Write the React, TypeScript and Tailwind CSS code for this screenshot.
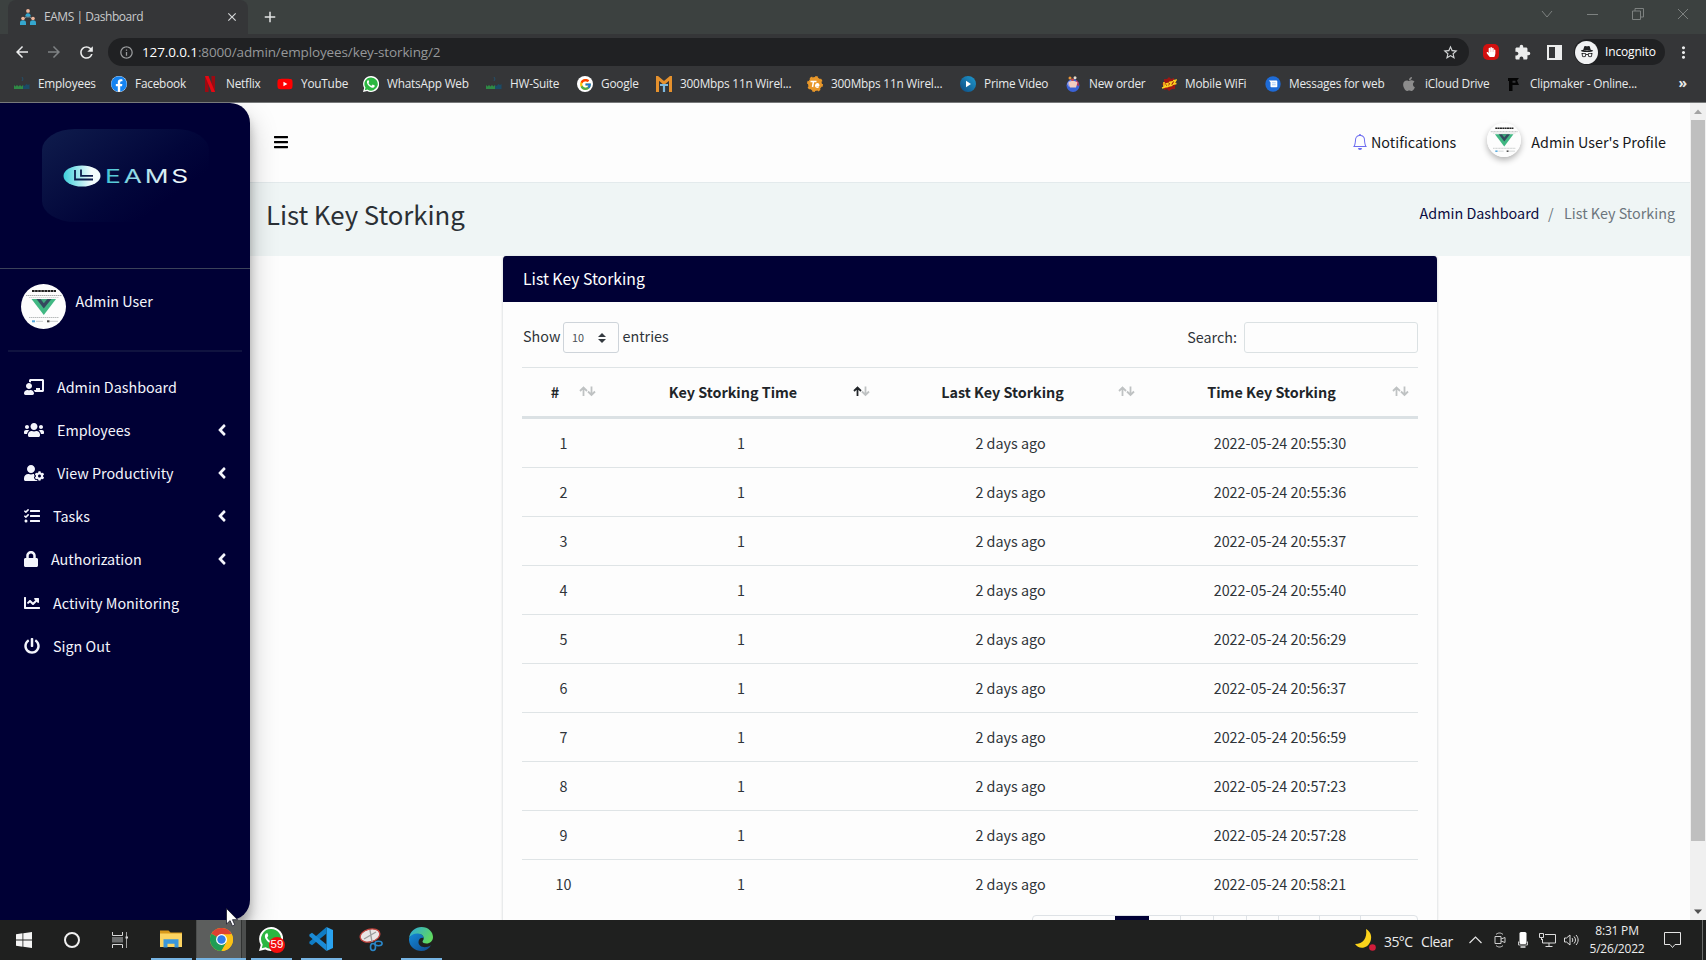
import React from "react";
import {
  FaAngleLeft,
  FaApple,
  FaBars,
  FaChalkboardTeacher,
  FaChartLine,
  FaFacebook,
  FaHandPaper,
  FaLock,
  FaPowerOff,
  FaTasks,
  FaUserCog,
  FaUsers,
  FaYoutube,
} from "react-icons/fa";
import { FcGoogle } from "react-icons/fc";
import { BsBell, BsIncognito } from "react-icons/bs";
import {
  MdArrowBack,
  MdArrowForward,
  MdClose,
  MdExtension,
  MdInfoOutline,
  MdMoreVert,
  MdRefresh,
  MdStarBorder,
  MdAdd,
} from "react-icons/md";

/* ---------- Small drawings ---------- */

function SuiteIcon() {
  return (
    <svg width="16" height="16" viewBox="0 0 16 16">
      <path d="M0 13V9l1.500 1.500L3 9l1.500 1.500L6 9l1.500 1.500L9 9v4z" fill="#2f8a45" />
      <path d="M9 13V9l1.500 1 2-2 1.500 1 1.500-1v5z" fill="#1b4b66" />
      <path d="M8 1l1 2-1 2" stroke="#24506b" fill="none" />
    </svg>
  );
}

function NetflixIcon() {
  return (
    <svg width="16" height="16" viewBox="0 0 16 16">
      <path d="M3 0h3.500v16H3zM9.500 0H13v16H9.500z" fill="#9d0a12" />
      <path d="M3 0h3.500L13 16H9.500z" fill="#e50914" />
    </svg>
  );
}

function WhatsAppIcon({ size }: { size: number }) {
  return (
    <svg width={size} height={size} viewBox="0 0 24 24">
      <path d="M12 0a12 12 0 0 0-10.300 18L0 24l6.200-1.600A12 12 0 1 0 12 0z" fill="#fff" />
      <path d="M12 2.100a9.900 9.900 0 0 0-8.300 15.300L2.800 21.200l3.900-1A9.900 9.900 0 1 0 12 2.100z" fill="#2bb741" />
      <path
        d="M8.600 6.600c-.3-.6-1.300-.5-1.800.1-2.400 2.800.4 6.700 3.200 8.900 2.600 2 5.900 2.700 7.300.4.500-1 .3-1.700-.2-2l-2-1c-.5-.2-.8-.1-1.100.4l-.8 1c-.3.300-.6.300-1 .1-1.800-.8-3-2-3.900-3.600-.2-.4-.1-.6.200-.9.700-.8.900-1.100.6-1.700z"
        fill="#fff"
      />
    </svg>
  );
}

function MtIcon() {
  return (
    <svg width="16" height="16" viewBox="0 0 16 16" fill="none">
      <path d="M1.500 16V1.500L8 7l6.500-5.500V16" stroke="#e5912d" strokeWidth="3" />
      <path d="M4 9h8M8 9v7" stroke="#7db9df" strokeWidth="2.200" />
    </svg>
  );
}

function GearTeIcon() {
  return (
    <svg width="16" height="16" viewBox="0 0 16 16" fill="none">
      <circle cx="8" cy="8" r="7" fill="#e8972a" />
      <circle cx="8" cy="8" r="7" stroke="#e8972a" strokeWidth="2" strokeDasharray="2.700 2.800" />
      <path d="M3.500 5.500h6M6.500 5.500l-1 5.500M8.500 9.200h3.200c0-2.200-2.800-2-3 .4-.1 1.800 1.800 2 3 .9" stroke="#fff" strokeWidth="1.500" />
    </svg>
  );
}

function PrimeIcon() {
  return (
    <svg width="16" height="16" viewBox="0 0 16 16">
      <defs>
        <linearGradient id="prime" x1="0" y1="1" x2="1" y2="0">
          <stop offset="0" stopColor="#0c4a80" />
          <stop offset="1" stopColor="#1f9bd0" />
        </linearGradient>
      </defs>
      <circle cx="8" cy="8" r="8" fill="url(#prime)" />
      <path d="M6 4.800v6.400L11 8z" fill="#fff" />
    </svg>
  );
}

function OrderIcon() {
  return (
    <svg width="16" height="16" viewBox="0 0 16 16">
      <circle cx="8" cy="9.500" r="6.500" fill="#3b62d6" />
      <path d="M2 8a6 6 0 0 1 4-4l3 3-5 4z" fill="#8f9be8" />
      <path d="M11 4a6 6 0 0 1 3 6l-3-1z" fill="#b3324f" />
      <path d="M3.500 6.500c2-2 7-2 9 0L11 11.500H5z" fill="#f3cdc0" />
      <circle cx="5" cy="2" r="1.500" fill="#e9963a" />
      <circle cx="10" cy="1.700" r="1.500" fill="#e6dccd" />
      <circle cx="7.500" cy="3.800" r="1.300" fill="#d8453a" />
    </svg>
  );
}

function JazzIcon() {
  return (
    <svg width="16" height="16" viewBox="0 0 16 16" fill="none">
      <path d="M8 1l2 2 3-1v3l2.500 2L14 10l0 3-3 0-3 2-2-2-3 1 0-3-2-3 2-2 0-3 3 0z" fill="#9d1713" />
      <path d="M3 6v5.500L1 12M4.500 8l2.500-.5-.3 3-2.200.3.200-2M8 6.500l3-.6-2.500 4 3-.6M12 4.800l3-.6-2.500 4 3-.6" stroke="#ffd21f" strokeWidth="1.500" />
    </svg>
  );
}

function MessagesIcon() {
  return (
    <svg width="16" height="16" viewBox="0 0 16 16">
      <circle cx="8" cy="8" r="7.700" fill="#1e6bd6" />
      <path d="M3.800 4.500h7.700c.5 0 .8.300.8.800v5.200c0 .5-.3.800-.8.800H6.300c-.5 0-.8-.3-.8-.8V6.300z" fill="#fff" />
      <path d="M7 6.800h3.800M7 8.800h3.800" stroke="#a9c9f5" />
    </svg>
  );
}

function ClipIcon() {
  return (
    <svg width="16" height="16" viewBox="0 0 16 16">
      <path d="M2 2h11l-2 2.500 2 4.500H6.500v6H3V5H2zM6.500 4.800v2h3v-2z" fill="#050505" fillRule="evenodd" />
    </svg>
  );
}

function TabIcon() {
  return (
    <svg width="16" height="16" viewBox="0 0 16 16">
      <path d="M8 6v3M4 9.500L8 7l4 2.500" stroke="#7a8a92" fill="none" />
      <circle cx="8" cy="1.900" r="1.900" fill="#efb69a" />
      <path d="M5.200 7.600c0-4.600 5.600-4.600 5.600 0z" fill="#35a7cf" />
      <circle cx="3" cy="9.500" r="1.800" fill="#efb69a" />
      <path d="M0 16v-2.500c0-3 6-3 6 0V16z" fill="#35a7cf" />
      <circle cx="13" cy="9.500" r="1.800" fill="#efb69a" />
      <path d="M10 16v-2.500c0-3 6-3 6 0V16z" fill="#35a7cf" />
    </svg>
  );
}

function VueAvatar({ size }: { size: number }) {
  return (
    <svg width={size} height={size} viewBox="0 0 45 45">
      <circle cx="22.500" cy="22.500" r="22.500" fill="#fdfdfd" />
      <path d="M11 7h24" stroke="#222" strokeWidth="2.200" strokeDasharray="2.600 .5" />
      <path d="M5 11.500h36" stroke="#a9adad" strokeWidth="1" strokeDasharray="1.500 .5" />
      <path d="M8 13.500h30" stroke="#c9cccc" strokeWidth=".8" strokeDasharray="1.500 .5" />
      <path d="M10.500 15h24.500L22.800 31z" fill="#41b883" />
      <path d="M15.500 15h15L22.800 24.500z" fill="#35495e" />
      <path d="M19.600 15h6.800l-3.600 4.200z" fill="#41b883" opacity=".85" />
      <path d="M8 33.500h30" stroke="#b9bcbc" strokeWidth="1" strokeDasharray="1.500 .5" />
      <path d="M11 37.300h3" stroke="#55a9dd" strokeWidth="2" />
      <path d="M15 37.300h7M29 37.300h8" stroke="#c9cccc" strokeWidth="1" />
      <path d="M26 37.300h2.500" stroke="#444" strokeWidth="2" />
    </svg>
  );
}

function EamsLogo() {
  return (
    <svg width="167" height="94" viewBox="0 0 167 94">
      <defs>
        <linearGradient id="panel" x1="0" y1="0" x2="1" y2=".75">
          <stop offset="0" stopColor="#0f1c4c" />
          <stop offset=".62" stopColor="#02063a" />
          <stop offset=".85" stopColor="#000035" />
        </linearGradient>
        <linearGradient id="oval" x1="0" y1="0" x2="1" y2="0">
          <stop offset="0" stopColor="#3ccfdb" />
          <stop offset=".75" stopColor="#f3fcfd" />
        </linearGradient>
        <linearGradient id="word" x1="0" y1="0" x2="1" y2="0">
          <stop offset="0" stopColor="#3fc4d4" />
          <stop offset=".6" stopColor="#cfeaf2" />
          <stop offset="1" stopColor="#ffffff" />
        </linearGradient>
      </defs>
      <rect width="167" height="93" rx="33" ry="21" fill="url(#panel)" />
      <ellipse cx="40" cy="47" rx="18.500" ry="10.500" fill="url(#oval)" />
      <path d="M33 41v9.500h18M39 40.500v6.300h12" stroke="#0b1c4c" strokeWidth="1.800" fill="none" />
      <text
        x="63"
        y="53.500"
        fontFamily="Inter, sans-serif"
        fontSize="18.500"
        textLength="86"
        lengthAdjust="spacingAndGlyphs"
        letterSpacing="2"
        fill="url(#word)"
      >
        EAMS
      </text>
    </svg>
  );
}

/* ---------- Browser chrome ---------- */

const bookmarks: { label: string; icon: React.ReactNode; width: string }[] = [
  { label: "Employees", icon: <SuiteIcon />, width: "w-[97px]" },
  { label: "Facebook", icon: <span className="rounded-full bg-white"><FaFacebook size={16} color="#1583f0" /></span>, width: "w-[91px]" },
  { label: "Netflix", icon: <NetflixIcon />, width: "w-[75px]" },
  { label: "YouTube", icon: <span className="relative flex"><span className="absolute inset-1 bg-white" /><FaYoutube size={16} color="#f00" className="relative" /></span>, width: "w-[86px]" },
  { label: "WhatsApp Web", icon: <WhatsAppIcon size={16} />, width: "w-[123px]" },
  { label: "HW-Suite", icon: <SuiteIcon />, width: "w-[91px]" },
  { label: "Google", icon: <span className="flex size-4 items-center justify-center rounded-full bg-white"><FcGoogle size={13} /></span>, width: "w-[79px]" },
  { label: "300Mbps 11n Wirel...", icon: <MtIcon />, width: "w-[151px]" },
  { label: "300Mbps 11n Wirel...", icon: <GearTeIcon />, width: "w-[153px]" },
  { label: "Prime Video", icon: <PrimeIcon />, width: "w-[105px]" },
  { label: "New order", icon: <OrderIcon />, width: "w-[96px]" },
  { label: "Mobile WiFi", icon: <JazzIcon />, width: "w-[104px]" },
  { label: "Messages for web", icon: <MessagesIcon />, width: "w-[136px]" },
  { label: "iCloud Drive", icon: <FaApple size={16} color="#8c8c8c" />, width: "w-[105px]" },
  { label: "Clipmaker - Online...", icon: <ClipIcon />, width: "w-[140px]" },
];

function BrowserChrome() {
  return (
    <header className="flex h-[103px] shrink-0 flex-col border-b border-[#77797a] bg-[#353638] font-['Open_Sans',sans-serif] text-white">
      <div className="flex h-[34px] bg-[#3c4140]">
        <div className="ml-2 flex h-[34px] w-[240px] items-center rounded-t-lg bg-[#353638] pl-3 pr-[9px]">
          <TabIcon />
          <span className="ml-2 flex-1 text-[12px] tracking-[-0.45px] text-[#c9cbcc]">EAMS | Dashboard</span>
          <MdClose size={14} color="#d5d7d8" />
        </div>
        <MdAdd size={18} color="#e2e4e4" className="ml-[13px] mt-2" />
        <div className="ml-auto flex h-7 items-center gap-[33px] pr-[17px] text-[#7d8180]">
          <svg width="12" height="12" viewBox="0 0 12 12" fill="none" stroke="currentColor"><path d="M1 3l5 6 5-6" /></svg>
          <svg width="13" height="12" viewBox="0 0 13 12" fill="none" stroke="currentColor"><path d="M1 6.500h11" /></svg>
          <svg width="12" height="12" viewBox="0 0 12 12" fill="none" stroke="currentColor"><path d="M.5 3h8v8.500h-8zM3 3V.5h8.500V9H8.500" /></svg>
          <svg width="12" height="12" viewBox="0 0 12 12" fill="none" stroke="currentColor"><path d="M1 1l10 10M11 1L1 11" /></svg>
        </div>
      </div>

      <div className="flex h-9 items-center pl-[13px]">
        <MdArrowBack size={18} color="#eceded" />
        <MdArrowForward size={18} color="#7f8284" className="ml-[14px]" />
        <MdRefresh size={19} color="#eceded" className="ml-[14px]" />
        <div className="ml-3 flex h-7 w-[1361px] items-center rounded-full bg-[#202123] pl-[11px] pr-2.5">
          <MdInfoOutline size={15} color="#9a9c9e" />
          <span className="ml-2 text-[13.5px] tracking-[-0.12px] text-[#96989a]">
            <span className="text-white">127.0.0.1</span>:8000/admin/employees/key-storking/2
          </span>
          <MdStarBorder size={17} color="#d2d4d5" className="ml-auto" />
        </div>
        <span className="ml-[14px] flex size-4 items-center justify-center rounded-[5px] bg-[#d2100f]">
          <FaHandPaper size={10} color="#fff" />
        </span>
        <MdExtension size={17} color="#eceded" className="ml-[15px]" />
        <span className="ml-4 flex h-[15px] w-[15px] justify-end border-2 border-[#eceded]">
          <span className="w-[5px] bg-[#eceded]" />
        </span>
        <div className="ml-3 flex h-[26px] w-[91px] items-center rounded-full bg-[#202123] pl-px">
          <span className="flex size-[23px] items-center justify-center rounded-full bg-[#f1f2f3]">
            <BsIncognito size={14} color="#202123" />
          </span>
          <span className="ml-[7px] text-[12px] tracking-[-0.15px]">Incognito</span>
        </div>
        <MdMoreVert size={19} color="#eceded" className="ml-[9px]" />
      </div>

      <div className="flex h-7 items-center pl-[14px] text-[11.800px] tracking-[-0.2px] text-[#e8eaeb]">
        {bookmarks.map((b, i) => (
          <div key={i} className={`flex shrink-0 items-center gap-2 whitespace-nowrap ${b.width}`}>
            <span className="flex size-4 shrink-0 items-center justify-center">{b.icon}</span>
            {b.label}
          </div>
        ))}
        <span className="-mt-0.5 ml-auto pr-[19px] text-[14px] font-bold leading-4">»</span>
      </div>
    </header>
  );
}

/* ---------- Sidebar ---------- */

const menu: { label: string; icon: React.ReactNode; arrow?: boolean }[] = [
  { label: "Admin Dashboard", icon: <FaChalkboardTeacher className="h-4 w-5" /> },
  { label: "Employees", icon: <FaUsers className="h-4 w-5" />, arrow: true },
  { label: "View Productivity", icon: <FaUserCog className="h-4 w-5" />, arrow: true },
  { label: "Tasks", icon: <FaTasks className="size-4" />, arrow: true },
  { label: "Authorization", icon: <FaLock className="h-4 w-3.5" />, arrow: true },
  { label: "Activity Monitoring", icon: <FaChartLine className="size-4" /> },
  { label: "Sign Out", icon: <FaPowerOff className="size-4" /> },
];

function Sidebar() {
  return (
    <aside className="relative z-10 flex w-[250px] shrink-0 flex-col rounded-r-[20px] bg-[#000035] text-[14.35px] text-[#f4f5fc] shadow-[0_14px_28px_rgba(0,0,0,0.25),0_10px_10px_rgba(0,0,0,0.22)]">
      <div className="h-[166px] border-b border-[#3b4259] pl-[42px] pt-[26px]">
        <EamsLogo />
      </div>
      <div className="mx-2 flex h-[83px] border-b-2 border-[#101340] pl-[12.5px] pt-[15px]">
        <VueAvatar size={45} />
        <span className="ml-[10px] mt-[5px] leading-6">Admin User</span>
      </div>
      <nav className="flex flex-col pt-[13px]">
        {menu.map((m) => (
          <a key={m.label} className="flex h-[43.2px] items-center gap-[13px] pl-6 pr-[19px]">
            {m.icon}
            <span className="leading-6">{m.label}</span>
            {m.arrow && <FaAngleLeft size={18} className="ml-auto" />}
          </a>
        ))}
      </nav>
    </aside>
  );
}

/* ---------- Main content ---------- */

const times = [
  "20:55:30",
  "20:55:36",
  "20:55:37",
  "20:55:40",
  "20:56:29",
  "20:56:37",
  "20:56:59",
  "20:57:23",
  "20:57:28",
  "20:58:21",
];

const columns = [
  { label: "#", sorted: false, pad: "pr-2" },
  { label: "Key Storking Time", sorted: true, pad: "pr-2" },
  { label: "Last Key Storking", sorted: false, pad: "pr-[7px]" },
  { label: "Time Key Storking", sorted: false, pad: "pr-[9px]" },
];

function SortIcon({ sorted }: { sorted: boolean }) {
  return (
    <svg width="17" height="11" viewBox="0 0 17 11" fill="none" strokeWidth="1.800">
      <path d="M4.500 10V1.500M1 5l3.500-3.500L8 5" stroke={sorted ? "#212529" : "#bfc2c3"} />
      <path d="M12.500 .5V9M9 5.500L12.500 9 16 5.500" stroke="#bfc2c3" />
    </svg>
  );
}

function TableCard() {
  return (
    <section className="ml-[252px] flex w-[936px] flex-col overflow-hidden rounded-t border-x border-[#e9ebec] bg-[#fdfdfd] shadow-[0_0_2px_rgba(0,0,0,0.12)]">
      <h3 className="-mx-px flex h-[46px] shrink-0 items-center bg-[#000035] pl-[21px] text-[15.75px] text-white">List Key Storking</h3>
      <div className="flex flex-col px-[19px]">
        <div className="flex h-[65px] items-start justify-between pt-5">
          <div className="flex items-start pl-px">
            <span className="mt-[1.5px] w-10 leading-6">Show</span>
            <span className="flex h-[31px] w-14 items-center justify-between rounded-[3px] border border-[#ced4da] pl-2 pr-3 text-[10.800px] text-[#495057]">
              10
              <svg width="8" height="10" viewBox="0 0 8 10" fill="#343a40"><path d="M4 0l4 4H0zM4 10l4-4H0z" /></svg>
            </span>
            <span className="ml-[3.5px] mt-[1.5px] leading-6">entries</span>
          </div>
          <div className="flex items-start">
            <span className="mr-[7px] mt-[3px] leading-6">Search:</span>
            <span className="h-[31px] w-[174px] rounded-[3px] border border-[#dbe1e3]" />
          </div>
        </div>
        <table className="w-full table-fixed border-separate border-spacing-0 text-center">
          <colgroup>
            <col className="w-[82px]" />
            <col className="w-[274px]" />
            <col className="w-[264px]" />
            <col className="w-[276px]" />
          </colgroup>
          <thead>
            <tr className="h-[52px]">
              {columns.map((c) => (
                <th key={c.label} className="border-b-[3px] border-t border-b-[#dbe1e4] border-t-[#dfe4e6] p-0 font-bold leading-6 text-[#212529]">
                  <div className={`-mt-px flex items-center pl-[9px] ${c.pad}`}>
                    <span className="flex-1 text-center">{c.label}</span>
                    <span className="-mt-px w-[17px]"><SortIcon sorted={c.sorted} /></span>
                  </div>
                </th>
              ))}
            </tr>
          </thead>
          <tbody className="[&>tr:first-child]:h-12 [&>tr:first-child>td]:border-t-0 [&_td]:border-t [&_td]:border-[#dfe4e6]">
            {times.map((t, i) => (
              <tr key={t} className="h-[49px]">
                <td className="p-0 pl-px leading-6">{i + 1}</td>
                <td className="p-0 leading-6">1</td>
                <td className="p-0 pl-px leading-6">2 days ago</td>
                <td className="p-0 leading-6">2022-05-24 {t}</td>
              </tr>
            ))}
          </tbody>
        </table>
        <div className="ml-auto mt-[7px] flex h-9 w-[386px] shrink-0 rounded border border-[#dee2e6]">
          <span className="w-[82px]" />
          <span className="w-[34px] bg-[#000035]" />
          <span className="w-8 border-r border-[#dee2e6]" />
          <span className="w-[33px] border-r border-[#dee2e6]" />
          <span className="w-[33px] border-r border-[#dee2e6]" />
          <span className="w-8 border-r border-[#dee2e6]" />
          <span className="w-[41px] border-r border-[#dee2e6]" />
          <span className="w-[41px] border-r border-[#dee2e6]" />
        </div>
      </div>
    </section>
  );
}

function Main() {
  return (
    <main className="flex min-w-0 flex-1 flex-col overflow-hidden bg-[#fdfdfd]">
      <div className="flex h-20 shrink-0 items-center border-b border-[#e3eaec] pb-0.5 pl-[23px] pr-6 text-[#16181b]">
        <FaBars size={16} color="#000" />
        <BsBell size={16} color="#6c6cf0" className="ml-auto" />
        <span className="ml-[3px]">Notifications</span>
        <span className="-mt-1 ml-[31px] mr-[10px] rounded-full shadow-[0_3px_6px_rgba(0,0,0,0.3)]"><VueAvatar size={34} /></span>
        <span>Admin User's Profile</span>
      </div>
      <div className="flex h-[73px] shrink-0 items-start justify-between bg-[#eff5f5] pl-4 pr-[15px]">
        <h1 className="mt-[13px] text-[25.8px] leading-[35px] tracking-[-0.05px] text-[#2b3035]">List Key Storking</h1>
        <p className="mt-[18px] leading-6 text-[#6c757d]">
          <span className="text-[#0b0b3f]">Admin Dashboard</span>
          <span className="ml-[8.5px] mr-[10.5px]">/</span>
          <span>List Key Storking</span>
        </p>
      </div>
      <TableCard />
    </main>
  );
}

function Scrollbar() {
  return (
    <div className="flex w-4 shrink-0 flex-col items-center bg-[#f0f0f0]">
      <svg width="16" height="17" viewBox="0 0 16 17"><path d="M8 6.500l4 4.500H4z" fill="#a3a3a3" /></svg>
      <div className="h-[721px] w-[14px] bg-[#bfbfbf]" />
      <svg width="16" height="17" viewBox="0 0 16 17" className="mt-auto"><path d="M8 11l4-4.500H4z" fill="#505050" /></svg>
    </div>
  );
}

/* ---------- Taskbar ---------- */

function ExplorerIcon() {
  return (
    <svg width="22" height="20" viewBox="0 0 22 20">
      <path d="M0 1.500h8.500l2 2H22V18H0z" fill="#d99a1c" />
      <path d="M0 4.500h22V18H0z" fill="#fcd462" />
      <path d="M3.500 18.500v-8.200h15v8.200h-4v-3.700h-7v3.700z" fill="#3a97dc" />
    </svg>
  );
}

function ChromeIcon() {
  return (
    <svg width="23" height="23" viewBox="0 0 24 24">
      <circle cx="12" cy="12" r="12" fill="#fbc116" />
      <path d="M12 12L1.600 6a12 12 0 0 1 20.800 0z" fill="#dd4132" />
      <path d="M1.600 6a12 12 0 0 0 10.400 18l5.200-9L12 12z" fill="#1f9d55" />
      <path d="M12 6.500h10.700A12 12 0 0 1 12 24l5-9z" fill="#fbc116" />
      <circle cx="12" cy="12" r="5.700" fill="#fff" />
      <circle cx="12" cy="12" r="4.400" fill="#2f7de9" />
    </svg>
  );
}

function VsCodeIcon() {
  return (
    <svg width="24" height="24" viewBox="0 0 24 24">
      <path d="M17.500 0L24 3v18l-6.500 3z" fill="#2aa3f0" />
      <path d="M17.500 0v6.500L3 18.200.4 16.600v-1.800z" fill="#0f7cc4" />
      <path d="M17.500 24v-6.500L3 5.800.4 7.400v1.800z" fill="#1b8bd6" />
    </svg>
  );
}

function SnipIcon() {
  return (
    <svg width="24" height="24" viewBox="0 0 24 24" fill="none">
      <ellipse cx="11" cy="7.500" rx="10" ry="6.300" transform="rotate(-14 11 7.500)" fill="#e9e6e6" stroke="#c5453f" strokeWidth="1.300" />
      <path d="M5 11l12-7M11 2l2 12" stroke="#9c9c9c" strokeWidth="1.400" />
      <ellipse cx="14" cy="19" rx="2.500" ry="3.500" stroke="#2b87c8" strokeWidth="1.600" />
      <ellipse cx="19.500" cy="15.500" rx="3.600" ry="2.200" stroke="#2b87c8" strokeWidth="1.600" />
    </svg>
  );
}

function EdgeIcon() {
  return (
    <svg width="24" height="24" viewBox="0 0 24 24">
      <defs>
        <linearGradient id="edgeTop" x1="0" y1="0" x2="1" y2=".5">
          <stop offset="0" stopColor="#2aa7e0" />
          <stop offset="1" stopColor="#5fd860" />
        </linearGradient>
        <linearGradient id="edgeLow" x1="0" y1="0" x2="1" y2="1">
          <stop offset="0" stopColor="#1389d8" />
          <stop offset="1" stopColor="#114a8c" />
        </linearGradient>
      </defs>
      <path d="M0 11C1 4 6.500 0 12.500 0 19.500 0 24 5 24 10c0 4-3 6.500-6.500 6.500-2.500 0-4-.9-4-2 0-.7 1.200-1.200 1.200-3.200C14.700 8.500 12 7 9 7c-4 0-7 2-9 4z" fill="url(#edgeTop)" />
      <path d="M0 11.500C1.500 8 5 6.300 9 6.500c3.500.2 5.700 2.300 5.700 4.800C13.500 9.800 9.500 11 9.500 15c0 5 6.500 7 12.500 3.200C20 22 16.500 24 12.300 24 5.500 24-.5 18.800 0 11.500z" fill="url(#edgeLow)" />
    </svg>
  );
}

function TaskButton({ children, open = true }: { children: React.ReactNode; open?: boolean }) {
  return (
    <div className="flex w-[50px] justify-center">
      <div
        className={
          open
            ? "flex w-[41px] items-center justify-center border-b-2 border-[#76b4e3]"
            : "flex w-[41px] items-center justify-center"
        }
      >
        {children}
      </div>
    </div>
  );
}

function Taskbar() {
  return (
    <footer className="flex h-10 shrink-0 bg-[#1f201f] font-['Open_Sans',sans-serif] text-[#ececec]">
      <div className="flex w-12 items-center justify-center">
        <svg width="16" height="16" viewBox="0 0 16 16" fill="#f4f4f4"><path d="M0 2.200L6.500 1.300V7.600H0zM7.300 1.200L16 0v7.600H7.300zM0 8.400h6.500v6.300L0 13.800zM7.300 8.400H16V16l-8.700-1.200z" /></svg>
      </div>
      <div className="flex w-12 items-center justify-center">
        <span className="size-4 rounded-full border-2 border-[#f0f0f0]" />
      </div>
      <div className="flex w-[50px] items-center pl-4">
        <svg width="17" height="16" viewBox="0 0 17 16" fill="none" stroke="#d8d8d8">
          <path d="M.5 0v3.500h10V0M.5 16v-3.500h10V16" />
          <path d="M0 5h11v5.500H0z" fill="#6c6e6e" stroke="none" />
          <path d="M14.500 0v16" stroke="#a0a0a0" />
          <path d="M13.500 5.500h2.500" strokeWidth="2" />
        </svg>
      </div>
      <TaskButton><ExplorerIcon /></TaskButton>
      <div className="flex w-[50px] border-b-2 border-[#76b4e3] bg-[#4c4e4d]">
        <div className="ml-px flex w-[45px] items-center justify-center border-r border-[#303231] bg-[#5c5e5d] pl-1"><ChromeIcon /></div>
      </div>
      <TaskButton>
        <span className="relative flex">
          <WhatsAppIcon size={24} />
          <span className="absolute left-2.5 top-2.5 flex size-4 items-center justify-center rounded-full bg-[#f20d0d] font-['Liberation_Sans',sans-serif] text-[11.500px] leading-none text-white">59</span>
        </span>
      </TaskButton>
      <TaskButton><VsCodeIcon /></TaskButton>
      <TaskButton open={false}><SnipIcon /></TaskButton>
      <TaskButton><EdgeIcon /></TaskButton>

      <div className="ml-auto flex items-center">
        <svg width="22" height="22" viewBox="0 0 22 22">
          <path d="M11 0c9 5 5 17-2 18.500-4 .8-7-.7-9-3.500C8 15 12.500 9 11 0z" fill="#fbd21b" />
          <circle cx="17.500" cy="18.500" r="3.300" fill="#d21d3a" />
        </svg>
        <span className="ml-[7px] mt-0.5 w-[37px] text-[14px] tracking-[-0.6px]">35°C</span>
        <span className="mt-0.5 w-12 text-[14px] tracking-[-0.4px]">Clear</span>
        <svg width="13" height="8" viewBox="0 0 13 8" fill="none" stroke="#e4e4e4" strokeWidth="1.200"><path d="M.5 7l6-6 6 6" /></svg>
        <svg width="12" height="16" viewBox="0 0 12 16" fill="none" stroke="#cfcfcf" className="ml-3"><path d="M1 4.500h6v7H1zM7 7l4-1.500v5L7 9M2 2.500C4 .5 7 .5 9 2.500M2 13.500c2 2 5 2 7 0" /></svg>
        <svg width="10" height="16" viewBox="0 0 10 16" className="ml-3">
          <rect x="1.500" width="7" height="12" rx="1.500" fill="#fff" />
          <path d="M.5 9.500v3.500h9V9.500" stroke="#c4c4c4" fill="none" />
          <path d="M2.500 15h5" stroke="#e8e8e8" strokeWidth="1.500" />
        </svg>
        <svg width="17" height="14" viewBox="0 0 17 14" fill="none" stroke="#dcdcdc" className="ml-[11px]"><path d="M6 1.500h10.500v8.500H3.500V6M10 10v3M6.500 13.500h7M.5 .5h4v4h-4zM2.500 4.500V7" /></svg>
        <svg width="15" height="14" viewBox="0 0 15 14" fill="none" stroke="#dcdcdc" className="ml-2"><path d="M.5 5h2L6 2v10L2.500 9h-2zM8 5c1 1 1 3 0 4M10 3.500c2 2 2 5 0 7M12 2c2.800 3 2.800 7 0 10" /></svg>
        <div className="ml-[9px] flex w-[58px] flex-col items-center text-[12px] leading-[18px] tracking-[-0.2px]">
          <span>8:31 PM</span>
          <span>5/26/2022</span>
        </div>
        <svg width="17" height="17" viewBox="0 0 17 17" fill="none" stroke="#e4e4e4" className="ml-[18px]"><path d="M.5 .5h16v12H11L8.500 15.500 6 12.500H.5z" /></svg>
        <span className="ml-[21px] mr-[3px] h-10 w-px bg-[#6a6c6b]" />
      </div>
    </footer>
  );
}

export default function App() {
  return (
    <div className="relative flex h-[960px] w-[1706px] flex-col overflow-hidden bg-[#fdfdfd]">
      <BrowserChrome />
      <div className="flex h-[817px] shrink-0 overflow-hidden font-['Noto_Sans_CJK_SC',sans-serif] text-[14.35px] text-[#2f3439]">
        <Sidebar />
        <Main />
        <Scrollbar />
      </div>
      <Taskbar />
      <svg className="absolute left-[226px] top-[908px] z-20" width="13" height="19" viewBox="0 0 13 19">
        <path d="M.5 .5v15.500l3.600-3.400 2.300 5.300 2.400-1-2.300-5.200h5z" fill="#fff" stroke="#1c1c2c" strokeWidth=".8" />
      </svg>
    </div>
  );
}
